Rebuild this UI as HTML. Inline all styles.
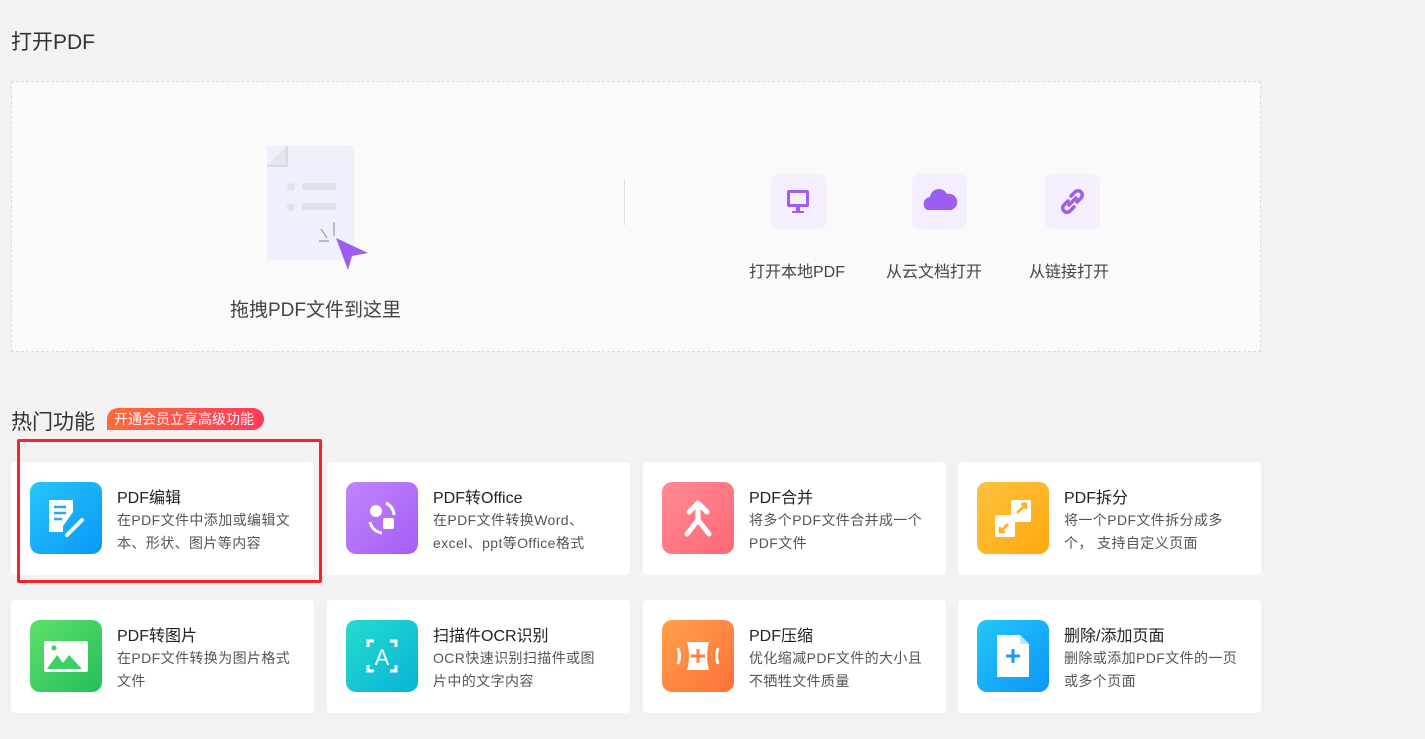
<!DOCTYPE html>
<html><head><meta charset="utf-8"><style>
*{margin:0;padding:0;box-sizing:border-box}
body{width:1425px;height:739px;background:#f2f2f2;font-family:"Liberation Sans","Noto Sans CJK SC",sans-serif;color:#333;position:relative;overflow:hidden}
.a{position:absolute}
h2{position:absolute;font-weight:normal;font-size:21px;color:#333}
.drop{left:11px;top:81px;width:1250px;height:271px;border:1px dashed #ddd;background:#fafafa}
.card{position:absolute;width:303px;height:113px;background:#fff;border-radius:4px}
.ic{position:absolute;left:19px;top:20px;width:72px;height:72px;border-radius:10px}
.t{position:absolute;left:106px;top:22px;font-size:16px;color:#222}
.d{position:absolute;left:106px;top:47px;width:182px;font-size:14px;line-height:23px;color:#555;letter-spacing:0.4px}
.sq{position:absolute;width:55px;height:55px;border-radius:8px;background:#f4eefe;top:174px}
.lb{position:absolute;top:258px;font-size:16px;color:#444}
</style></head><body>
<h2 style="left:11px;top:26px">打开PDF</h2>
<div class="a drop"></div>
<svg class="a" style="left:262px;top:144px" width="110" height="128">
<path d="M5 2h87v114H5V22z" fill="#eef1fb"/>
<path d="M5 22L25 2v20z" fill="#e3e6f0"/><path d="M5 22h20V2" stroke="#c6c8d0" fill="none"/>
<circle cx="29" cy="43" r="4" fill="#dfe2ea"/><rect x="40" y="39" width="34" height="7" fill="#dfe2ea"/>
<circle cx="29" cy="63" r="4" fill="#dfe2ea"/><rect x="40" y="59" width="34" height="7" fill="#dfe2ea"/>
<path d="M59 85l6 9M72 78v14M57 97h10" stroke="#888" stroke-width="1"/>
<path d="M74 94l32 15-16 3-4 14z" fill="#9b5ef0"/>
</svg>
<div class="a" style="left:230px;top:295px;font-size:19px;color:#444">拖拽PDF文件到这里</div>
<div class="a" style="left:624px;top:180px;width:1px;height:45px;background:#ddd"></div>
<div class="sq" style="left:771px"><svg width="55" height="55"><rect x="16" y="16" width="22" height="17" rx="2" fill="#9b5ef0"/><rect x="19" y="19" width="16" height="11" fill="#f4eefe"/><rect x="25" y="33" width="4" height="4" fill="#9b5ef0"/><rect x="21" y="37" width="12" height="2" fill="#9b5ef0"/></svg></div>
<div class="sq" style="left:912px"><svg width="55" height="55"><path d="M15 36a7 7 0 0 1 3-13 9 9 0 0 1 17-3 7 7 0 0 1 4 16z" fill="#9b5ef0"/></svg></div>
<div class="sq" style="left:1045px"><svg width="55" height="55"><g stroke="#9b5ef0" stroke-width="3.5" fill="none" stroke-linecap="round"><path d="M26 22l4-4a4 4 0 0 1 6 6l-4 4"/><path d="M29 33l-4 4a4 4 0 0 1-6-6l4-4"/><path d="M24 31l7-7"/></g></svg></div>
<div class="lb" style="left:749px">打开本地PDF</div>
<div class="lb" style="left:886px">从云文档打开</div>
<div class="lb" style="left:1029px">从链接打开</div>
<h2 style="left:11px;top:406px">热门功能</h2>
<div class="a" style="left:107px;top:408px;height:22px;padding:0 10px 0 7px;border-radius:11px 11px 11px 0;background:linear-gradient(90deg,#ff6a3d,#ff3b5c);color:#fff;font-size:14px;line-height:22px">开通会员立享高级功能</div>

<div class="card" style="left:11px;top:462px"><div class="ic" style="background:linear-gradient(135deg,#26c6fb,#0a97f7)"><svg width="72" height="72"><path d="M19 18h24v12l-10 14v6H19z" fill="#fff"/><path d="M24 25h12M24 31h12M24 37h8" stroke="#2aa8f8" stroke-width="2.5"/><path d="M37 53l15-15" stroke="#fff" stroke-width="4" stroke-linecap="round"/></svg></div><div class="t">PDF编辑</div><div class="d">在PDF文件中添加或编辑文本、形状、图片等内容</div></div>
<div class="card" style="left:327px;top:462px"><div class="ic" style="background:linear-gradient(135deg,#c085fb,#a65df6)"><svg width="72" height="72"><circle cx="30" cy="29" r="6" fill="#fff"/><rect x="37" y="36" width="11" height="11" rx="2" fill="#fff"/><path d="M40 21a14 14 0 0 1 8 12M24 40a14 14 0 0 0 12 11" stroke="#fff" stroke-width="3" fill="none"/></svg></div><div class="t">PDF转Office</div><div class="d">在PDF文件转换Word、excel、ppt等Office格式</div></div>
<div class="card" style="left:643px;top:462px"><div class="ic" style="background:linear-gradient(135deg,#ff8a95,#ff6874)"><svg width="72" height="72"><path d="M27 30l9-9 9 9M36 22v16M25 52l11-14 11 14" stroke="#fff" stroke-width="5" fill="none" stroke-linecap="round" stroke-linejoin="round"/></svg></div><div class="t">PDF合并</div><div class="d">将多个PDF文件合并成一个PDF文件</div></div>
<div class="card" style="left:958px;top:462px"><div class="ic" style="background:linear-gradient(135deg,#ffc13f,#ffa90f)"><svg width="72" height="72"><rect x="34" y="18" width="20" height="22" rx="2" fill="#fff"/><rect x="18" y="33" width="20" height="22" rx="2" fill="#fff"/><path d="M40 31l9-9M44 22h5v5M23 50l8-8M23 45v5h5" stroke="#ffae1a" stroke-width="2.5" fill="none"/></svg></div><div class="t">PDF拆分</div><div class="d">将一个PDF文件拆分成多<br>个， 支持自定义页面</div></div>

<div class="card" style="left:11px;top:600px"><div class="ic" style="background:linear-gradient(135deg,#5ee06a,#23bf5c)"><svg width="72" height="72"><rect x="14" y="21" width="44" height="31" rx="2" fill="#fff"/><circle cx="24" cy="28" r="2.5" fill="#3ccf63"/><path d="M17 49l10-14 6 8 6-8 13 14z" fill="#3ccf63"/></svg></div><div class="t">PDF转图片</div><div class="d">在PDF文件转换为图片格式<br>文件</div></div>
<div class="card" style="left:327px;top:600px"><div class="ic" style="background:linear-gradient(135deg,#26dccd,#07b3d6)"><svg width="72" height="72"><path d="M22 27v-6h6M44 21h6v6M50 45v6h-6M28 51h-6v-6" stroke="#fff" stroke-width="3" fill="none"/><text x="36" y="45" text-anchor="middle" fill="#fff" font-size="22" font-family="Liberation Sans">A</text></svg></div><div class="t">扫描件OCR识别</div><div class="d">OCR快速识别扫描件或图<br>片中的文字内容</div></div>
<div class="card" style="left:643px;top:600px"><div class="ic" style="background:linear-gradient(135deg,#ffa14a,#ff703a)"><svg width="72" height="72"><path d="M25 22h22q-4 14 0 28H25q4-14 0-28z" fill="#fff"/><path d="M36 29v14M29 36h14" stroke="#ff8040" stroke-width="3"/><path d="M16 28q3 8 0 16M56 28q-3 8 0 16" stroke="#fff" stroke-width="3" fill="none"/></svg></div><div class="t">PDF压缩</div><div class="d">优化缩减PDF文件的大小且<br>不牺牲文件质量</div></div>
<div class="card" style="left:958px;top:600px"><div class="ic" style="background:linear-gradient(135deg,#26c6fb,#0a97f7)"><svg width="72" height="72"><path d="M20 15h23l9 9v33H20z" fill="#fff"/><path d="M43 15v9h9z" fill="#bfe6ff"/><path d="M36 29v14M29 36h14" stroke="#1a9ef7" stroke-width="3"/></svg></div><div class="t">删除/添加页面</div><div class="d">删除或添加PDF文件的一页<br>或多个页面</div></div>

<div class="a" style="left:17px;top:439px;width:305px;height:144px;border:3px solid #f5222d;border-radius:2px"></div>
</body></html>
